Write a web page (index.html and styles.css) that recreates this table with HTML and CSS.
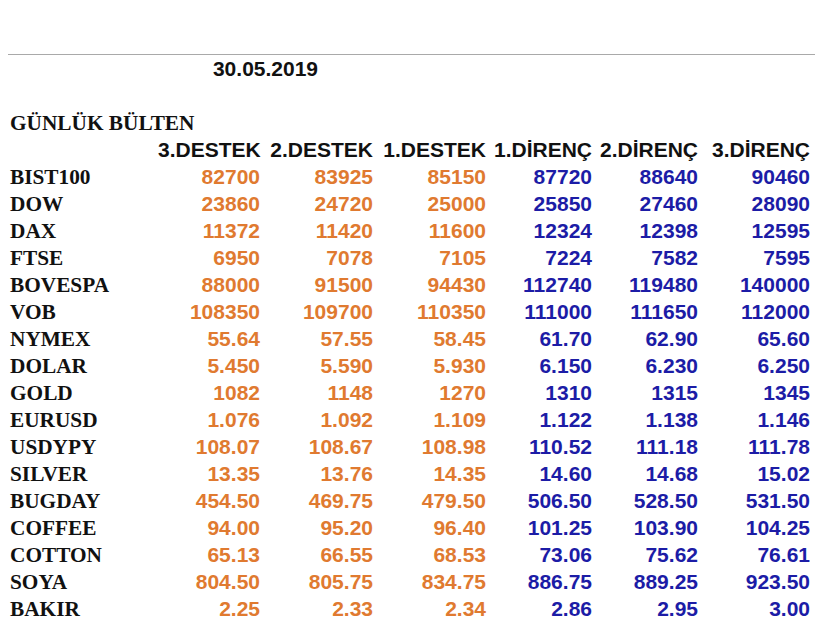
FILE: index.html
```html
<!DOCTYPE html>
<html lang="tr">
<head>
<meta charset="utf-8">
<title>Günlük Bülten</title>
<link rel="stylesheet" href="styles.css">
</head>
<body>
<div class="page">
  <div class="rule"></div>
  <div class="sheet">
    <div class="date">30.05.2019</div>
    <div class="blank"></div>
    <div class="title">GÜNLÜK BÜLTEN</div>

    <div class="label"></div>
    <div class="head">3.DESTEK</div><div class="head">2.DESTEK</div><div class="head">1.DESTEK</div>
    <div class="head">1.DİRENÇ</div><div class="head">2.DİRENÇ</div><div class="head">3.DİRENÇ</div>

    <div class="label">BIST100</div>
    <div class="s">82700</div><div class="s">83925</div><div class="s">85150</div>
    <div class="r">87720</div><div class="r">88640</div><div class="r">90460</div>

    <div class="label">DOW</div>
    <div class="s">23860</div><div class="s">24720</div><div class="s">25000</div>
    <div class="r">25850</div><div class="r">27460</div><div class="r">28090</div>

    <div class="label">DAX</div>
    <div class="s">11372</div><div class="s">11420</div><div class="s">11600</div>
    <div class="r">12324</div><div class="r">12398</div><div class="r">12595</div>

    <div class="label">FTSE</div>
    <div class="s">6950</div><div class="s">7078</div><div class="s">7105</div>
    <div class="r">7224</div><div class="r">7582</div><div class="r">7595</div>

    <div class="label">BOVESPA</div>
    <div class="s">88000</div><div class="s">91500</div><div class="s">94430</div>
    <div class="r">112740</div><div class="r">119480</div><div class="r">140000</div>

    <div class="label">VOB</div>
    <div class="s">108350</div><div class="s">109700</div><div class="s">110350</div>
    <div class="r">111000</div><div class="r">111650</div><div class="r">112000</div>

    <div class="label">NYMEX</div>
    <div class="s">55.64</div><div class="s">57.55</div><div class="s">58.45</div>
    <div class="r">61.70</div><div class="r">62.90</div><div class="r">65.60</div>

    <div class="label">DOLAR</div>
    <div class="s">5.450</div><div class="s">5.590</div><div class="s">5.930</div>
    <div class="r">6.150</div><div class="r">6.230</div><div class="r">6.250</div>

    <div class="label">GOLD</div>
    <div class="s">1082</div><div class="s">1148</div><div class="s">1270</div>
    <div class="r">1310</div><div class="r">1315</div><div class="r">1345</div>

    <div class="label">EURUSD</div>
    <div class="s">1.076</div><div class="s">1.092</div><div class="s">1.109</div>
    <div class="r">1.122</div><div class="r">1.138</div><div class="r">1.146</div>

    <div class="label">USDYPY</div>
    <div class="s">108.07</div><div class="s">108.67</div><div class="s">108.98</div>
    <div class="r">110.52</div><div class="r">111.18</div><div class="r">111.78</div>

    <div class="label">SILVER</div>
    <div class="s">13.35</div><div class="s">13.76</div><div class="s">14.35</div>
    <div class="r">14.60</div><div class="r">14.68</div><div class="r">15.02</div>

    <div class="label">BUGDAY</div>
    <div class="s">454.50</div><div class="s">469.75</div><div class="s">479.50</div>
    <div class="r">506.50</div><div class="r">528.50</div><div class="r">531.50</div>

    <div class="label">COFFEE</div>
    <div class="s">94.00</div><div class="s">95.20</div><div class="s">96.40</div>
    <div class="r">101.25</div><div class="r">103.90</div><div class="r">104.25</div>

    <div class="label">COTTON</div>
    <div class="s">65.13</div><div class="s">66.55</div><div class="s">68.53</div>
    <div class="r">73.06</div><div class="r">75.62</div><div class="r">76.61</div>

    <div class="label">SOYA</div>
    <div class="s">804.50</div><div class="s">805.75</div><div class="s">834.75</div>
    <div class="r">886.75</div><div class="r">889.25</div><div class="r">923.50</div>

    <div class="label">BAKIR</div>
    <div class="s">2.25</div><div class="s">2.33</div><div class="s">2.34</div>
    <div class="r">2.86</div><div class="r">2.95</div><div class="r">3.00</div>
  </div>
</div>
</body>
</html>
```
FILE: styles.css
```css
html, body {
  margin: 0;
  padding: 0;
  background: #ffffff;
}
body {
  padding: 8px;
  overflow: hidden;
}
.page {
  padding-top: 46px;
}
.rule {
  height: 1px;
  background: #a9a9a9;
  margin-right: -3px;
}
.sheet {
  display: grid;
  grid-template-columns: 150px 102px 113px 113px 106px 106px 112px;
  grid-auto-rows: 27px;
  font-family: "Liberation Sans", Arial, sans-serif;
  font-weight: bold;
  font-size: 21px;
  line-height: 27px;
}
.date {
  grid-column: 2 / 4;
  text-align: center;
  color: #111111;
}
.blank {
  grid-column: 1 / -1;
}
.title {
  grid-column: 1 / -1;
  font-family: "Liberation Serif", "Times New Roman", serif;
  font-size: 21.3px;
  color: #111111;
  padding-left: 2px;
  padding-top: 1px;
}
.label {
  font-family: "Liberation Serif", "Times New Roman", serif;
  font-size: 21.3px;
  color: #111111;
  padding-left: 2px;
  padding-top: 1px;
}
.head {
  text-align: right;
  color: #111111;
}
.s {
  text-align: right;
  color: #e07a30;
}
.r {
  text-align: right;
  color: #1c1ca6;
}
```
